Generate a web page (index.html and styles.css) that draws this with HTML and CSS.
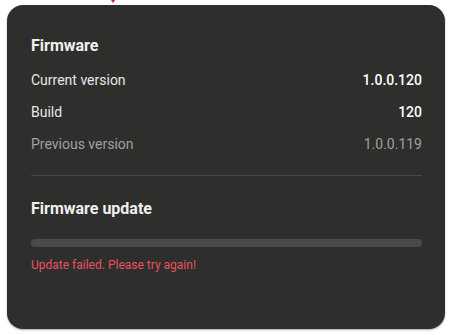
FILE: index.html
```html
<!DOCTYPE html>
<html>
<head>
<meta charset="utf-8">
<link rel="stylesheet" href="styles.css">
</head>
<body>
<span class="pointer"></span>
<div class="card">
  <h2 class="title">Firmware</h2>
  <div class="rows">
    <div class="row"><span class="label">Current version</span><span class="value">1.0.0.120</span></div>
    <div class="row"><span class="label">Build</span><span class="value">120</span></div>
    <div class="row muted"><span class="label">Previous version</span><span class="value">1.0.0.119</span></div>
  </div>
  <div class="divider"></div>
  <h2 class="title update-title">Firmware update</h2>
  <div class="progress"><div class="progress-fill"></div></div>
  <p class="error">Update failed. Please try again!</p>
</div>
</body>
</html>
```

FILE: styles.css
```css
html, body {
  margin: 0;
  padding: 0;
  background: #ffffff;
}
body {
  position: relative;
  width: 453px;
  height: 335px;
  padding-top: 5px;
  box-sizing: border-box;
  font-family: Roboto, "Liberation Sans", sans-serif;
}
.pointer {
  position: absolute;
  left: 111px;
  top: 0;
  width: 0;
  height: 0;
  border-left: 2px solid transparent;
  border-right: 2px solid transparent;
  border-top: 3px solid #c2187e;
}
.card {
  margin-left: 7px;
  width: 438px;
  height: 324px;
  box-sizing: border-box;
  background: #2e2e2d;
  border-radius: 16px;
  padding: 31px 23px 0 24px;
  box-shadow: 0 1px 2px rgba(0, 0, 0, 0.35);
}
.title {
  margin: 0;
  font-size: 16px;
  line-height: 20px;
  font-weight: 700;
  color: #f0f0f0;
}
.rows {
  margin-top: 8px;
}
.row {
  display: flex;
  justify-content: space-between;
  align-items: center;
  height: 32px;
  font-size: 14px;
  line-height: 20px;
}
.label {
  color: #e8e8e8;
}
.value {
  color: #ffffff;
  font-weight: 500;
}
.row.muted .label,
.row.muted .value {
  color: #a0a0a0;
  font-weight: 400;
}
.divider {
  margin-top: 15px;
  height: 1px;
  background: #474747;
}
.update-title {
  margin-top: 23px;
}
.progress {
  margin-top: 20px;
  height: 8px;
  border-radius: 4px;
  background: #4a4a4a;
  overflow: hidden;
}
.progress-fill {
  width: 0;
  height: 100%;
}
.error {
  margin: 10px 0 0 0;
  font-size: 12px;
  line-height: 16px;
  color: #ea5162;
}
```
